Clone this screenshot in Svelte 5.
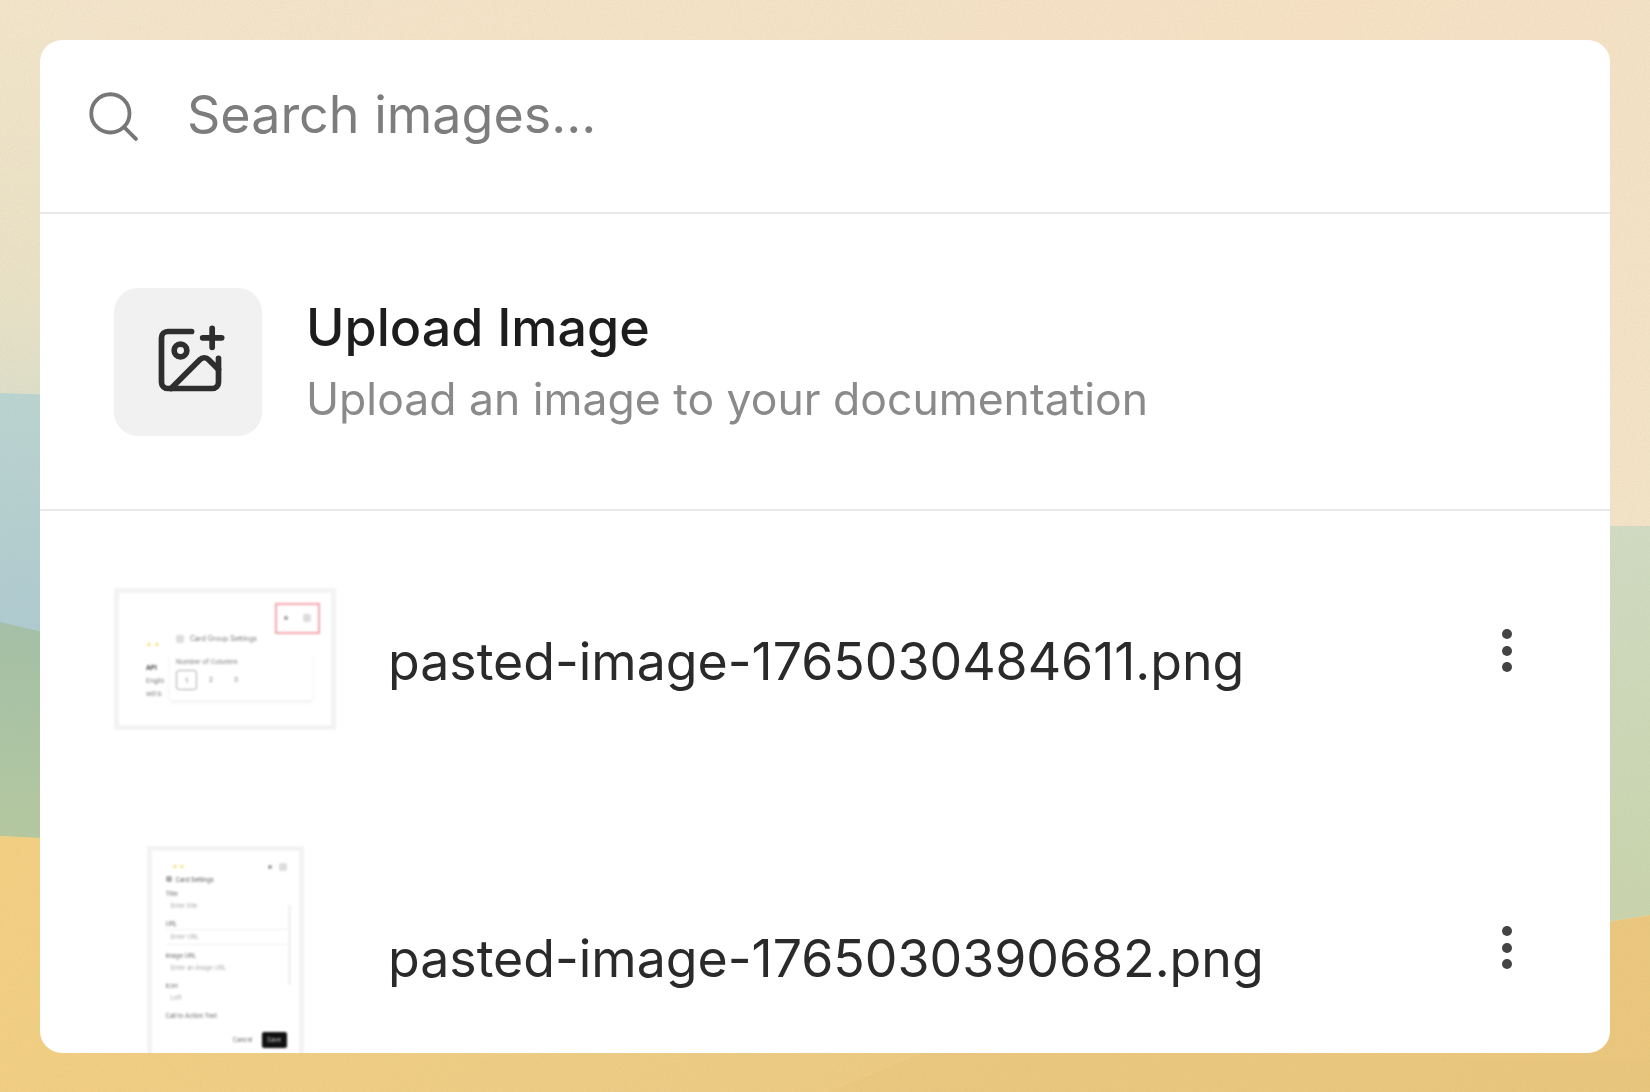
<script>
    const files = [
        { name: 'pasted-image-1765030484611.png', kind: 'wide' },
        { name: 'pasted-image-1765030390682.png', kind: 'tall' }
    ]
    const fields = [
        { label: 'Title', value: 'Enter title' },
        { label: 'URL', value: 'Enter URL', boxed: true },
        { label: 'Image URL', value: 'Enter an image URL' },
        { label: 'Icon', value: 'Left' }
    ]
</script>

<div class="page">
    <svg class="backdrop" viewBox="0 0 1650 1092" preserveAspectRatio="none" aria-hidden="true">
        <defs>
            <linearGradient id="top" x1="0" y1="0" x2="1" y2="0.6">
                <stop offset="0" stop-color="#f3e6cd" />
                <stop offset="0.6" stop-color="#f7e2c5" />
                <stop offset="1" stop-color="#f3e5ca" />
            </linearGradient>
            <linearGradient id="left" x1="0" y1="0" x2="0" y2="1">
                <stop offset="0" stop-color="#f3e6cc" />
                <stop offset="0.7" stop-color="#ebe3c8" />
                <stop offset="1" stop-color="#dfe0ca" />
            </linearGradient>
            <linearGradient id="blue" x1="0" y1="0" x2="0" y2="1">
                <stop offset="0" stop-color="#bad5d2" />
                <stop offset="1" stop-color="#aecbd3" />
            </linearGradient>
            <linearGradient id="green" x1="0" y1="0" x2="0" y2="1">
                <stop offset="0" stop-color="#a3c1a9" />
                <stop offset="1" stop-color="#b4c9a1" />
            </linearGradient>
            <linearGradient id="green-r" x1="0" y1="0" x2="0" y2="1">
                <stop offset="0" stop-color="#d0ddc4" />
                <stop offset="1" stop-color="#c9d5ae" />
            </linearGradient>
            <linearGradient id="sand" x1="0" y1="0" x2="1" y2="0.1">
                <stop offset="0" stop-color="#f3d083" />
                <stop offset="0.5" stop-color="#eecd85" />
                <stop offset="1" stop-color="#ecc87e" />
            </linearGradient>
            <filter id="grain">
                <feTurbulence type="fractalNoise" baseFrequency="0.7" numOctaves="2" seed="4" />
                <feColorMatrix values="0 0 0 0 0.45  0 0 0 0 0.35  0 0 0 0 0.2  0 0 0 0.5 -0.12" />
            </filter>
        </defs>
        <rect width="1650" height="1092" fill="url(#top)" />
        <rect width="60" height="394" fill="url(#left)" />
        <path d="M0 393 L60 395 L60 640 L0 624 Z" fill="url(#blue)" />
        <path d="M0 622 L60 636 L60 840 L0 836 Z" fill="url(#green)" />
        <path d="M1590 526 H1650 V915 L1590 925 Z" fill="url(#green-r)" />
        <path d="M0 836 L300 850 L1590 925 L1650 915 V1092 H0 Z" fill="url(#sand)" />
        <path d="M830 1092 L930 1050 L1650 1060 V1092 Z" fill="#e9c67c" opacity="0.55" />
        <rect width="1650" height="1092" filter="url(#grain)" opacity="0.35" />
    </svg>

    <div class="card">
        <div class="search">
            <svg class="search-icon" viewBox="0 0 24 24" fill="none" stroke="currentColor" stroke-width="1.8" stroke-linecap="round" stroke-linejoin="round">
                <circle cx="11" cy="11" r="9" />
                <path d="m23 23-5.2-5.2" />
            </svg>
            <span class="placeholder">Search images...</span>
        </div>

        <div class="upload">
            <div class="tile">
                <svg viewBox="0 0 24 24" fill="none" stroke="currentColor" stroke-width="1.8" stroke-linecap="round" stroke-linejoin="round">
                    <path d="M16 5h6" />
                    <path d="M19 2v6" />
                    <path d="M21 11.5V19a2 2 0 0 1-2 2H5a2 2 0 0 1-2-2V5a2 2 0 0 1 2-2h7.5" />
                    <path d="m21 15-3.086-3.086a2 2 0 0 0-2.828 0L6 21" />
                    <circle cx="9" cy="9" r="2" />
                </svg>
            </div>
            <div class="upload-text">
                <div class="upload-title">Upload Image</div>
                <div class="upload-sub">Upload an image to your documentation</div>
            </div>
        </div>

        <div class="list">
            {#each files as file}
                <div class="row">
                    <div class="thumb-slot">
                        {#if file.kind === 'wide'}
                            <div class="thumb wide">
                                <div class="toolbar">
                                    <div class="marked"><i class="plus"></i><i class="gear"></i></div>
                                </div>
                                <div class="wide-body">
                                    <div class="cut-off">
                                        <div class="stars">✦ ✦</div>
                                        <b>API</b>
                                        <span>Englis</span>
                                        <span>will b</span>
                                    </div>
                                    <div class="popup">
                                        <div class="popup-title"><i class="gear"></i>Card Group Settings</div>
                                        <div class="popup-panel">
                                            <div>Number of Columns</div>
                                            <div class="cols"><span class="on">1</span><span>2</span><span>3</span></div>
                                        </div>
                                    </div>
                                </div>
                            </div>
                        {:else}
                            <div class="thumb tall">
                                <div class="tall-head"><span class="stars">✦ ✦</span><i class="plus"></i><i class="gear"></i></div>
                                <div class="tall-title"><i class="gear"></i>Card Settings</div>
                                {#each fields as field}
                                    <div class="field-label">{field.label}</div>
                                    <div class="field-value" class:boxed={field.boxed}>{field.value}</div>
                                {/each}
                                <div class="field-label">Call to Action Text</div>
                                <div class="tall-actions"><span>Cancel</span><span class="save">Save</span></div>
                                <div class="scroll"></div>
                            </div>
                        {/if}
                    </div>
                    <div class="file-name">{file.name}</div>
                    <div class="dots"><i></i><i></i><i></i></div>
                </div>
            {/each}
        </div>
    </div>
</div>

<style>
    :global(body) {
        margin: 0;
        background: #f3e6cd;
    }

    .page {
        position: relative;
        width: 1650px;
        height: 1092px;
        padding: 40px 40px 39px;
        box-sizing: border-box;
        overflow: hidden;
        font-family: Inter, "Liberation Sans", sans-serif;
    }

    .backdrop {
        position: absolute;
        inset: 0;
        width: 100%;
        height: 100%;
    }

    .card {
        position: relative;
        height: 100%;
        background: #fff;
        border-radius: 22px;
        overflow: hidden;
    }

    .search {
        display: flex;
        align-items: center;
        gap: 49px;
        height: 174px;
        padding: 0 0 22px 47px;
        box-sizing: border-box;
        border-bottom: 2px solid #e9e9e9;
    }

    .search-icon {
        width: 51px;
        height: 51px;
        color: #777;
    }

    .placeholder {
        font-size: 52px;
        color: #7d7d7d;
        line-height: 1;
        filter: blur(0.5px);
    }

    .upload {
        display: flex;
        align-items: center;
        gap: 44px;
        height: 297px;
        padding: 0 0 0 74px;
        box-sizing: border-box;
        border-bottom: 2px solid #e9e9e9;
    }

    .tile {
        display: flex;
        align-items: center;
        justify-content: center;
        width: 148px;
        height: 148px;
        background: #f1f1f1;
        border-radius: 24px;
    }

    .tile svg {
        width: 76px;
        height: 76px;
        color: #2e2e2e;
        margin: 0 0 4px 4px;
    }

    .upload-text {
        display: flex;
        flex-direction: column;
        gap: 18px;
        filter: blur(0.5px);
    }

    .upload-title {
        font-size: 52px;
        font-weight: 500;
        color: #1d1d1d;
        line-height: 56px;
    }

    .upload-sub {
        font-size: 44.5px;
        color: #8a8a8a;
        line-height: 50px;
    }

    .list {
        display: flex;
        flex-direction: column;
    }

    .row {
        display: flex;
        align-items: center;
        height: 297px;
        padding: 0 74px;
    }

    .thumb-slot {
        display: flex;
        justify-content: center;
        flex: none;
        width: 222px;
        margin-right: 52px;
    }

    .file-name {
        flex: 1;
        font-size: 51.8px;
        color: #2a2a2a;
        line-height: 60px;
        margin-top: 2px;
        filter: blur(0.5px);
    }

    .dots {
        display: flex;
        flex-direction: column;
        gap: 6.5px;
        margin: 0 24px 18px 0;
        filter: blur(0.5px);
    }

    .dots i {
        display: block;
        width: 10px;
        height: 10px;
        border-radius: 50%;
        background: #444;
    }

    .thumb {
        position: relative;
        box-sizing: border-box;
        background: #fff;
        border: 5px solid #f3f3f3;
        color: #777;
        font-size: 6.5px;
        filter: blur(0.8px);
    }

    .thumb i {
        display: block;
    }

    .plus {
        width: 4px;
        height: 4px;
        border-radius: 50%;
        background: #999;
    }

    .gear {
        width: 8px;
        height: 8px;
        border-radius: 2px;
        background: #ddd;
    }

    .stars {
        color: #f3d75a;
        font-size: 7px;
    }

    .thumb.wide {
        width: 222px;
        height: 142px;
        margin-bottom: 2px;
    }

    .toolbar {
        display: flex;
        justify-content: flex-end;
        padding: 10px 11px 0 0;
    }

    .marked {
        display: flex;
        align-items: center;
        justify-content: space-around;
        box-sizing: border-box;
        width: 45px;
        height: 31px;
        border: 2px solid #f4a5ab;
    }

    .wide-body {
        display: flex;
        margin-top: -5px;
    }

    .cut-off {
        display: flex;
        flex-direction: column;
        gap: 5px;
        width: 22px;
        padding: 11px 0 0 27px;
        overflow: hidden;
        white-space: nowrap;
    }

    .cut-off b {
        margin-top: 10px;
        color: #444;
    }

    .popup {
        margin-left: 2px;
        width: 142px;
    }

    .popup-title {
        display: flex;
        align-items: center;
        gap: 6px;
        padding: 0 0 0 6px;
        font-size: 7px;
        height: 20px;
    }

    .popup-panel {
        margin-top: 5px;
        height: 46px;
        padding: 4px 6px;
        box-sizing: border-box;
        box-shadow: 0 2px 4px rgba(0, 0, 0, 0.07);
    }

    .cols {
        display: flex;
        align-items: center;
        gap: 15px;
        margin-top: 4px;
    }

    .cols span {
        width: 10px;
        text-align: center;
    }

    .cols .on {
        width: 21px;
        height: 20px;
        line-height: 20px;
        box-sizing: border-box;
        border: 1px solid #aaa;
        border-radius: 3px;
        margin-right: -6px;
    }

    .thumb.tall {
        display: flex;
        flex-direction: column;
        flex: none;
        width: 157px;
        height: 222px;
        padding: 11px 12px 0 14px;
        font-size: 6px;
    }

    .tall-head {
        display: flex;
        align-items: center;
        gap: 7px;
        height: 10px;
    }

    .tall-head .stars {
        flex: 1;
        padding-left: 6px;
    }

    .tall-title {
        display: flex;
        align-items: center;
        gap: 4px;
        margin-top: 4px;
        color: #555;
    }

    .tall-title .gear {
        width: 6px;
        height: 6px;
        background: #aaa;
    }

    .field-label {
        margin-top: 7px;
        color: #666;
        line-height: 8px;
    }

    .field-value {
        height: 14px;
        line-height: 14px;
        padding-left: 5px;
        margin-top: 1px;
        color: #aaa;
    }

    .field-value.boxed {
        border-top: 1px solid #f0f0f0;
        border-bottom: 1px solid #f0f0f0;
    }

    .tall-actions {
        display: flex;
        justify-content: flex-end;
        align-items: center;
        gap: 9px;
        margin-top: 12px;
        color: #666;
    }

    .save {
        width: 25px;
        height: 16px;
        line-height: 16px;
        text-align: center;
        background: #111;
        color: #ccc;
        border-radius: 2px;
    }

    .scroll {
        position: absolute;
        top: 54px;
        right: 8px;
        width: 3px;
        height: 80px;
        background: #f2f2f2;
    }
</style>
